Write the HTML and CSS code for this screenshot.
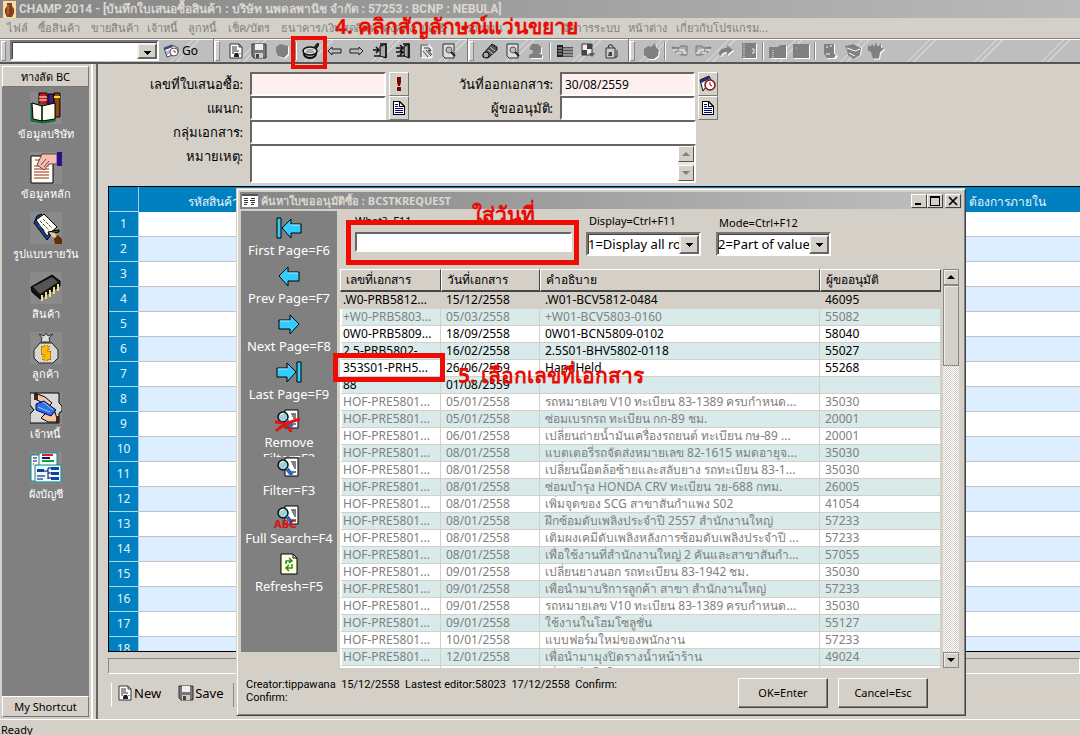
FILE: index.html
```html
<!DOCTYPE html>
<html lang="th">
<head>
<meta charset="utf-8">
<title>CHAMP 2014</title>
<link rel="stylesheet" href="styles.css">
</head>
<body>
<svg class="defs" width="0" height="0" aria-hidden="true">
  <symbol id="i-page" viewBox="0 0 16 16"><path d="M2 1h9l3 3v11H2z" fill="#fff" stroke="#333"/><path d="M11 1v3h3M4 4h5M4 6h5M4 8h7M4 10h2M12 10v1" stroke="#333" fill="none"/><path d="M6 14v-2l1-2h3l1 2v2z" fill="#222"/></symbol>
  <symbol id="i-disk" viewBox="0 0 16 16"><path d="M1 1h14v14H3l-2-2z" fill="#777" stroke="#333"/><path d="M4 1h8v6H4z" fill="#eee"/><path d="M4 10h8v5H4z" fill="#ccc"/><path d="M5 11h3v4H5z" fill="#444"/></symbol>
  <symbol id="i-shield" viewBox="0 0 16 16"><path d="M2 4l4-3 8 2v8l-4 4-6-2-2-5z" fill="#fff" transform="translate(1 1)"/><path d="M2 4l4-3 8 2v8l-4 4-6-2-2-5z" fill="#808080"/></symbol>
  <symbol id="i-mag" viewBox="0 0 18 18"><path d="M10 7l5-6h2v3l-4 5z" fill="#222"/><ellipse cx="8" cy="12" rx="6" ry="4" fill="#aaa" stroke="#111" stroke-width="2"/><ellipse cx="8" cy="9" rx="7" ry="4" fill="#ddd" stroke="#111" stroke-width="1.5"/><path d="M5 8h6M4 10h8" stroke="#777"/></symbol>
  <symbol id="i-left" viewBox="0 0 16 16"><path d="M2 8l4-4v2h9v4H6v2z" fill="#bbb" stroke="#222"/></symbol>
  <symbol id="i-right" viewBox="0 0 16 16"><path d="M14 8l-4-4v2H1v4h9v2z" fill="#bbb" stroke="#222"/></symbol>
  <symbol id="i-door" viewBox="0 0 16 16"><path d="M8 3l6-2v14l-6-2z" fill="#777" stroke="#111"/><path d="M10 4v9M12 3v10" stroke="#ddd"/><path d="M1 7h6M4 4l3 3-3 3M2 13h6M8 1h6v14" fill="none" stroke="#111" stroke-width="1.5"/></symbol>
  <symbol id="i-door2" viewBox="0 0 16 16"><path d="M9 3l5-2v14l-5-2z" fill="#777" stroke="#111"/><path d="M11 4v9" stroke="#ddd"/><path d="M1 5h7M5 2l3 3-3 3M1 9h7M5 7l3 2-3 3M2 13h7M8 1h6v14" fill="none" stroke="#111" stroke-width="1.5"/></symbol>
  <symbol id="i-tap" viewBox="0 0 16 16"><path d="M4 2h7l3 3v10H4z" fill="#ddd" stroke="#fff"/><path d="M3 14V2h7M6 5h5l2 3-3-1 4 5M5 8l5 6M8 7l5 6" stroke="#444" fill="none"/></symbol>
  <symbol id="i-pagemag" viewBox="0 0 16 16"><path d="M2 1h11v14H4l-2-2z" fill="#ddd" stroke="#333"/><circle cx="8" cy="7" r="3" fill="#bbb" stroke="#555"/><path d="M10 9l4 4" stroke="#222" stroke-width="2"/></symbol>
  <symbol id="i-roll" viewBox="0 0 16 16"><path d="M1 11L10 1l5 3v3L6 15l-5-1z" fill="#555" stroke="#111"/><circle cx="4" cy="12" r="3" fill="#aaa" stroke="#111"/><path d="M6 7l5 4M8 4l5 4" stroke="#ccc"/></symbol>
  <symbol id="i-person" viewBox="0 0 16 16"><path d="M4 2h6l3 2v6h-2l3 2v3H2v-3l3-2-1-3H2z" fill="#fff" transform="translate(1 1)"/><path d="M4 1h6l3 3v6h-2l3 2v3H1v-3l4-2-1-3H2V4z" fill="#808080"/></symbol>
  <symbol id="i-film" viewBox="0 0 16 16"><path d="M0 2h6v12H0z" fill="#222"/><path d="M6 4h10v10H6z" fill="#555"/><path d="M2 4v9M4 4v9" stroke="#bbb" stroke-dasharray="2 1"/><path d="M6 6h10M6 9h10M6 12h10" stroke="#ccc"/></symbol>
  <symbol id="i-cells" viewBox="0 0 16 16"><path d="M2 1h10v11H2z" fill="#eee" stroke="#333"/><path d="M7 1h5v5H7zM2 7h5v5H2z" fill="#444"/><path d="M9 10h6l-3 4z" fill="#555"/></symbol>
  <symbol id="i-bag" viewBox="0 0 16 16"><path d="M3 5h9v10H3z" fill="#ccc" stroke="#333"/><path d="M5 5l1-3h3l2 3M14 7v7h-2" stroke="#333" fill="none"/><path d="M5 13l1-4h3v4z" fill="#444"/></symbol>
  <symbol id="i-apple" viewBox="0 0 18 18"><path d="M2 7l4-3 3 1 4-4 1 4 3 3-1 6-4 3H7l-5-4z" fill="#fff" transform="translate(1 1)"/><path d="M2 7l4-3 3 1 4-4 1 4 3 3-1 6-4 3H7l-5-4z" fill="#808080"/></symbol>
  <symbol id="i-hand" viewBox="0 0 18 16"><path d="M1 4l7 1 2-2h6v9h-6l-3-2H5L4 8h3V6H2z" fill="#aaa" stroke="#777"/><path d="M2 7h5M8 7h5v3h3M5 10h5" stroke="#fff" fill="none"/></symbol>
  <symbol id="i-share" viewBox="0 0 16 16"><path d="M1 12c0-5 3-7 8-7V2l6 5-6 5V9c-3 0-5 1-6 4z" fill="#fff" transform="translate(1 1)"/><path d="M1 12c0-5 3-7 8-7V2l6 5-6 5V9c-3 0-5 1-6 4z" fill="#808080"/></symbol>
  <symbol id="i-note" viewBox="0 0 16 16"><path d="M2 1h14v15H2z" fill="#fff"/><path d="M1 0h14v15H1z" fill="#808080"/><path d="M3 1v14" stroke="#eee" stroke-dasharray="1 1"/><path d="M11 6h2v4h-2" stroke="#eee" fill="none"/></symbol>
  <symbol id="i-folder" viewBox="0 0 18 16"><path d="M1 4h9l2-2h5v13H1z" fill="#fff" transform="translate(1 1)"/><path d="M0 4h9l2-2h6v13H0z" fill="#808080"/><path d="M4 7v7" stroke="#eee" stroke-dasharray="1 1"/></symbol>
  <symbol id="i-box" viewBox="0 0 18 16"><path d="M2 2h16v14H2z" fill="#fff"/><path d="M1 1h16v14H1z" fill="#808080"/><path d="M4 5h1" stroke="#ddd"/></symbol>
  <symbol id="i-scroll" viewBox="0 0 16 16"><path d="M3 1h9v10l3 2-2 3H5l-3-4z" fill="#fff" transform="translate(1 0)"/><path d="M2 1h10v10l2 1-2 3H5l-3-4z" fill="#808080"/><path d="M4 4h2M8 3h2M4 11h4" stroke="#fff"/></symbol>
  <symbol id="i-pack" viewBox="0 0 18 16"><path d="M1 3l9-2 7 4-1 7-6 4-6-4-1-5z" fill="#fff" transform="translate(1 0)"/><path d="M1 3l9-2 7 4-1 7-6 4-6-4-1-5z" fill="#808080"/><path d="M3 5l8 3 5-2M5 10l6 3" stroke="#fff" fill="none"/></symbol>
  <symbol id="i-wave" viewBox="0 0 18 17"><path d="M1 3l3 1 1-3 2 3 2-4 2 4 3-3v4l3 1-4 4-1 6H6L4 10l-3-2z" fill="#fff" transform="translate(1 1)"/><path d="M1 3l3 1 1-3 2 3 2-4 2 4 3-3v4l3 1-4 4-1 6H6L4 10l-3-2z" fill="#808080"/></symbol>
  <symbol id="i-go" viewBox="0 0 16 16"><path d="M1 5l8-3 6 3v5L4 14z" fill="#fff" stroke="#445"/><path d="M1 5l8-3 1 2-8 3z" fill="#448"/><path d="M4 8v4M6 7v4" stroke="#66a"/><circle cx="11" cy="9" r="4" fill="#fff" stroke="#555"/><path d="M11 7v2h2" stroke="#a33" fill="none"/></symbol>
  <symbol id="i-doc" viewBox="0 0 14 14"><path d="M2 0h6l5 5v9H1V0z" fill="#000"/><path d="M2 1h5v5h5v7H2z" fill="#fff"/><path d="M8 2v3h3z" fill="#fff"/><path d="M3 3.5h3M3 5.5h3M3 7.500h8M3 9.500h8M3 11.500h8" stroke="#000080"/></symbol>
  <symbol id="i-bigleft" viewBox="0 0 26 22"><path d="M1 1h4v20H1z" fill="#3cf" stroke="#000"/><path d="M6 11l9-9v5h10v9H15v5z" fill="#3cf" stroke="#000"/><path d="M15 8h9" stroke="#aef"/></symbol>
  <symbol id="i-glass" viewBox="0 0 26 22"><path d="M9 1h13v18H9z" fill="#fff" stroke="#000"/><path d="M15 5h5M16 7h4M17 9h3M18 11h2M15 15h5" stroke="#000"/><circle cx="7" cy="8" r="5" fill="#9cd0dc" stroke="#111" stroke-width="1.5"/><path d="M4 6l4-2" stroke="#eff"/><path d="M11 12l5 6" stroke="#246ac0" stroke-width="4"/></symbol>
</svg>

<header class="titlebar">
  <svg width="13" height="17" viewBox="0 0 13 17"><path d="M0 0h13v17H0z" fill="#f4dfa0"/><path d="M4 2h5v3l2 3v4l-2 4H4l-2-4V8l2-3z" fill="#8a3d20"/><path d="M5 4v9" stroke="#c98a60"/></svg>
  <h1>CHAMP 2014 - [บันทึกใบเสนอซื้อสินค้า : บริษัท นพดลพานิช จำกัด : 57253 : BCNP : NEBULA]</h1>
</header>
<nav class="menubar">
  <button>ไฟล์</button><button>ซื้อสินค้า</button><button>ขายสินค้า</button><button>เจ้าหนี้</button><button>ลูกหนี้</button><button>เช็ค/บัตร</button><button>ธนาคาร/เงินสด</button><button>สินค้าคงคลัง</button><button>บัญชี</button><button>รายงาน</button><button>จัดการระบบ</button><button>หน้าต่าง</button><button>เกี่ยวกับโปรแกรม...</button>
</nav>
<div class="toolbar">
  <div class="band band-go">
    <span class="combo combo-go"><select aria-label="Go to"><option></option></select></span>
    <button class="go"><svg width="16" height="16"><use href="#i-go"/></svg>Go</button>
  </div>
  <div class="band band-a">
    <button aria-label="New"><svg><use href="#i-page"/></svg></button><button aria-label="Save"><svg><use href="#i-disk"/></svg></button><button aria-label="Delete"><svg><use href="#i-shield"/></svg></button><i class="sep"></i><button aria-label="Search"><svg class="wide"><use href="#i-mag"/></svg></button><button aria-label="Previous"><svg><use href="#i-left"/></svg></button><button aria-label="Next"><svg><use href="#i-right"/></svg></button><button aria-label="Close"><svg><use href="#i-door"/></svg></button><button aria-label="Close all"><svg><use href="#i-door2"/></svg></button><button aria-label="Select"><svg><use href="#i-tap"/></svg></button><button aria-label="Preview"><svg><use href="#i-pagemag"/></svg></button>
  </div>
  <div class="band band-b">
    <button aria-label="Roll"><svg><use href="#i-roll"/></svg></button><button aria-label="Find"><svg><use href="#i-pagemag"/></svg></button><button aria-label="User"><svg><use href="#i-person"/></svg></button><i class="sep"></i><button aria-label="List"><svg><use href="#i-film"/></svg></button><button aria-label="Cells"><svg><use href="#i-cells"/></svg></button><button aria-label="Bag"><svg><use href="#i-bag"/></svg></button>
  </div>
  <div class="band band-c">
    <button aria-label="Approve"><svg class="wide"><use href="#i-apple"/></svg></button><i class="sep"></i><button aria-label="Back"><svg class="wide"><use href="#i-hand"/></svg></button><button aria-label="Forward"><svg class="wide flip"><use href="#i-hand"/></svg></button><button aria-label="Send"><svg><use href="#i-share"/></svg></button><button aria-label="Notes"><svg><use href="#i-note"/></svg></button><i class="sep"></i><button aria-label="Folder"><svg class="wide"><use href="#i-folder"/></svg></button><button aria-label="Box"><svg class="wide"><use href="#i-box"/></svg></button><i class="sep"></i><button aria-label="Scroll"><svg><use href="#i-scroll"/></svg></button><button aria-label="Package"><svg class="wide"><use href="#i-pack"/></svg></button><button aria-label="Stop"><svg class="wide"><use href="#i-wave"/></svg></button>
  </div>
</div>

<div class="workspace">
  <aside class="shortcuts">
    <button class="tab">ทางลัด BC</button>
    <div class="shortcut-list">
      <button><svg viewBox="0 0 32 32"><path d="M9 1h8v16H9z" fill="#d01818" stroke="#000"/><path d="M9 5h8M9 8h8" stroke="#fff"/><path d="M18 2h6v16h-6z" fill="#402070" stroke="#000"/><path d="M24 1h6v24h-6z" fill="#8a4a10" stroke="#000"/><path d="M24 5h6" stroke="#ffd820" stroke-width="2"/><path d="M1 11v18l12 2 12-2V13" fill="#18803c" stroke="#063"/><path d="M2 11l10 3v15L3 27zM12 14l13-3v16l-13 2z" fill="#fffff0" stroke="#000"/></svg>ข้อมูลบริษัท</button>
      <button><svg viewBox="0 0 32 32"><path d="M1 4h22v27H1z" fill="#fffff4" stroke="#000"/><path d="M5 8h7M4 14h15M4 17h15M4 20h15M4 23h15M4 26h15" stroke="#a02020"/><path d="M12 2h15v10h-8l-5 6-4-3-3-2z" fill="#f0c0b0" stroke="#644"/><path d="M11 13l5-6M14 15l5-6" stroke="#844"/><path d="M27 0h5v14h-5z" fill="#281090"/></svg>ข้อมูลหลัก</button>
      <button><svg viewBox="0 0 32 32"><path d="M4 11l3-7 4-2 14 16-8 10z" fill="#2040a0" stroke="#000"/><path d="M6 8l8-6 13 13-10 9z" fill="#fffff0" stroke="#000"/><path d="M10 9l9 9M13 7l9 9M9 13l6 6" stroke="#555" stroke-dasharray="3 1"/><path d="M18 20l11-2v2l-10 2z" fill="#183" stroke="#000"/><path d="M19 20l6 1 2 5-5-1z" fill="#f2c0a0"/><path d="M24 27l4-4 4 4v5h-7z" fill="#603000"/></svg>รูปแบบรายวัน</button>
      <button><svg viewBox="0 0 32 32"><path d="M1 15L22 3l8 6v5L10 27 2 20z" fill="#111" stroke="#000"/><path d="M3 15L22 5l6 5-18 12z" fill="#555"/><path d="M12 23v6M16 20v7M20 18v7M24 15v7M28 12v7" stroke="#e8e090" stroke-width="2"/></svg>สินค้า</button>
      <button><svg viewBox="0 0 32 32"><path d="M9 2l3 4-1 4h9l-1-4 4-4-5 2-2-3-2 3z" fill="#ddd" stroke="#333"/><path d="M10 11h12l6 7v8l-5 5H9l-5-5v-8z" fill="#d8d8d0" stroke="#222"/><path d="M20 16h-7v5h6v5h-7M16 13v16" fill="none" stroke="#744" stroke-width="4"/><path d="M20 16h-7v5h6v5h-7M16 13v16" fill="none" stroke="#fb0" stroke-width="3"/></svg>ลูกค้า</button>
      <button><svg viewBox="0 0 32 32"><path d="M0 1h29v10l3 3v5l-3 2v10H0v-9l4-4-4-5z" fill="#d8d8d8" stroke="#000"/><path d="M5 1l10 4 7 6-3 3-8-4-6-3z" fill="#f5c8a0" stroke="#000"/><path d="M11 26l6-6h8l3 10h-10z" fill="#f5c8a0" stroke="#000"/><path d="M6 12l8-3 12 9-5 6L6 18z" fill="#3070e0" stroke="#006"/><path d="M8 15l12 5M13 10l10 8" stroke="#9cf"/><path d="M4 2h4v6H4zM26 24h3v7h-3z" fill="#422"/></svg>เจ้าหนี้</button>
      <button><svg viewBox="0 0 32 32"><path d="M1 3h22v26H1z" fill="#fff" stroke="#088"/><path d="M9 1h18v20H9z" fill="#fff" stroke="#088"/><path d="M12 3h11" stroke="#e02020" stroke-width="2"/><path d="M12 6h8" stroke="#208" stroke-width="2"/><path d="M12 9h12" stroke="#0a2" stroke-width="2"/><path d="M5 13h26v17H5z" fill="#e8fbff" stroke="#088"/><path d="M7 17h7v3H7zM21 15h8v3h-8zM21 20h8v3h-8zM21 25h8v3h-8z" fill="#1840a0"/><path d="M14 19h4M18 16v11M18 16h3M18 21h3M18 26h3M7 24h8M7 27h6M3 6h4M3 9h4M3 12h1" stroke="#000060" fill="none"/></svg>ผังบัญชี</button>
    </div>
    <button class="tab">My Shortcut</button>
  </aside>

  <main class="document">
    <form class="form">
      <label for="f-no">เลขที่ใบเสนอซื้อ:</label>
      <div class="field"><input id="f-no" class="required" type="text"><button type="button" aria-label="Generate"><svg width="14" height="18" viewBox="0 0 14 18"><path d="M5 2h4v5l-1 4H6L5 7z" fill="#800000"/><path d="M5 12h4v4H5z" fill="#800000"/></svg></button></div>
      <label for="f-date">วันที่ออกเอกสาร:</label>
      <div class="field"><input id="f-date" class="required" type="text" value="30/08/2559"><button type="button" aria-label="Calendar"><svg width="18" height="18" viewBox="0 0 18 18"><path d="M1 5l9-4 2 4-8 11z" fill="#fff" stroke="#000"/><path d="M1 5l9-4 1 3-9 4z" fill="#223078"/><circle cx="11" cy="10" r="5" fill="#fff" stroke="#801010" stroke-width="1.5"/><path d="M11 7v3l2 1" stroke="#a00" fill="none"/></svg></button></div>
      <label for="f-dept">แผนก:</label>
      <div class="field"><input id="f-dept" type="text"><button type="button" aria-label="Choose department"><svg width="14" height="14"><use href="#i-doc"/></svg></button></div>
      <label for="f-req">ผู้ขออนุมัติ:</label>
      <div class="field"><input id="f-req" type="text"><button type="button" aria-label="Choose requester"><svg width="14" height="14"><use href="#i-doc"/></svg></button></div>
      <label for="f-group">กลุ่มเอกสาร:</label>
      <div class="field long"><input id="f-group" type="text"></div>
      <label for="f-note">หมายเหตุ:</label>
      <div class="field long note"><textarea id="f-note"></textarea><div class="spin"><button type="button" aria-label="Up"><i class="up off"></i></button><button type="button" aria-label="Down"><i class="down off"></i></button></div></div>
    </form>

    <div class="grid">
      <table>
        <colgroup><col class="g-num"><col class="g-code"><col><col class="g-due"></colgroup>
        <thead><tr><th></th><th>รหัสสินค้า</th><th></th><th class="due">ต้องการภายใน</th></tr></thead>
        <tbody>
          <tr><th>1</th><td></td><td></td><td></td></tr><tr><th>2</th><td></td><td></td><td></td></tr>
          <tr><th>3</th><td></td><td></td><td></td></tr><tr><th>4</th><td></td><td></td><td></td></tr>
          <tr><th>5</th><td></td><td></td><td></td></tr><tr><th>6</th><td></td><td></td><td></td></tr>
          <tr><th>7</th><td></td><td></td><td></td></tr><tr><th>8</th><td></td><td></td><td></td></tr>
          <tr><th>9</th><td></td><td></td><td></td></tr><tr><th>10</th><td></td><td></td><td></td></tr>
          <tr><th>11</th><td></td><td></td><td></td></tr><tr><th>12</th><td></td><td></td><td></td></tr>
          <tr><th>13</th><td></td><td></td><td></td></tr><tr><th>14</th><td></td><td></td><td></td></tr>
          <tr><th>15</th><td></td><td></td><td></td></tr><tr><th>16</th><td></td><td></td><td></td></tr>
          <tr><th>17</th><td></td><td></td><td></td></tr><tr><th>18</th><td></td><td></td><td></td></tr>
        </tbody>
      </table>
    </div>
    <div class="info-line"></div>
    <div class="actions">
      <button><svg width="16" height="16"><use href="#i-page"/></svg>New</button>
      <button><svg width="16" height="16"><use href="#i-disk"/></svg>Save</button>
    </div>
  </main>
</div>
<footer class="status">Ready</footer>

<section class="dialog" role="dialog" aria-labelledby="dlg-title">
  <div class="dialog-title">
    <svg width="16" height="13" viewBox="0 0 16 13"><path d="M0 0h16v13H0z" fill="#fff"/><path d="M0 0h16v2H0z" fill="#556"/><path d="M2 4.500h4M2 6.500h4M2 8.500h4M2 10.500h3M9 4.500h4M8 6.500h5M9 8.500h4M9 10.500h3" stroke="#333"/></svg>
    <h2 id="dlg-title">ค้นหาใบขออนุมัติซื้อ : BCSTKREQUEST</h2>
    <div class="win-buttons">
      <button aria-label="Minimize"><svg width="10" height="10" viewBox="0 0 10 10"><path d="M1 7h6v2H1z"/></svg></button><button aria-label="Maximize"><svg width="10" height="10" viewBox="0 0 10 10"><path d="M0 0h10v10H0zM1 2v7h8V2z" fill-rule="evenodd"/></svg></button><button class="close" aria-label="Close"><svg width="10" height="10" viewBox="0 0 10 10"><path d="M1 1l8 8M9 1L1 9" stroke="#000" stroke-width="1.7"/></svg></button>
    </div>
  </div>
  <div class="dialog-body">
    <nav class="tools">
      <button><svg><use href="#i-bigleft"/></svg><span>First Page=F6</span></button>
      <button><svg viewBox="0 0 26 22"><path d="M3 11l9-9v5h11v9H12v5z" fill="#3cf" stroke="#000"/><path d="M12 8h10" stroke="#aef"/></svg><span>Prev Page=F7</span></button>
      <button><svg viewBox="0 0 26 22"><path d="M23 11l-9-9v5H3v9h11v5z" fill="#3cf" stroke="#000"/><path d="M4 8h10" stroke="#aef"/></svg><span>Next Page=F8</span></button>
      <button><svg class="flip"><use href="#i-bigleft"/></svg><span>Last Page=F9</span></button>
      <button><svg viewBox="0 0 26 22" class="over"><use href="#i-glass"/><path d="M-1 13c8 0 14 4 16 10M0 22c5-5 13-9 24-12" stroke="#e81010" stroke-width="3" fill="none"/></svg><span>Remove<br>Filter=F2</span></button>
      <button><svg><use href="#i-glass"/></svg><span>Filter=F3</span></button>
      <button><svg viewBox="0 0 26 22" class="over"><use href="#i-glass"/><text x="-2" y="23" class="abc">ABC</text></svg><span>Full Search=F4</span></button>
      <button><svg viewBox="0 0 26 22"><path d="M5 1h12l4 4v16H5z" fill="#ffffe0" stroke="#000"/><path d="M17 1v4h4" fill="none" stroke="#000"/><path d="M10 11V8h5M13 5l3 3-3 2M16 11v4h-5M13 12l-3 3 3 3" fill="none" stroke="#289018" stroke-width="1.5"/></svg><span>Refresh=F5</span></button>
    </nav>
    <div class="search">
      <div class="criteria">
        <div class="what"><label for="q">What?=F11</label><input id="q" type="text"></div>
        <div class="pick"><label for="disp">Display=Ctrl+F11</label><span class="combo"><select id="disp"><option>1=Display all rows</option></select></span></div>
        <div class="pick low"><label for="mode">Mode=Ctrl+F12</label><span class="combo"><select id="mode"><option>2=Part of value</option></select></span></div>
      </div>
      <div class="results">
        <div class="result-view">
        <table>
          <colgroup><col class="c-no"><col class="c-date"><col><col class="c-by"></colgroup>
          <thead><tr><th>เลขที่เอกสาร</th><th>วันที่เอกสาร</th><th>คำอธิบาย</th><th>ผู้ขออนุมัติ</th></tr></thead>
          <tbody>
            <tr class="selected"><td>.W0-PRB5812...</td><td>15/12/2558</td><td>.W01-BCV5812-0484</td><td>46095</td></tr>
            <tr class="dim"><td>+W0-PRB5803...</td><td>05/03/2558</td><td>+W01-BCV5803-0160</td><td>55082</td></tr>
            <tr><td>0W0-PRB5809...</td><td>18/09/2558</td><td>0W01-BCN5809-0102</td><td>58040</td></tr>
            <tr><td>2.5-PRB5802-</td><td>16/02/2558</td><td>2.5S01-BHV5802-0118</td><td>55027</td></tr>
            <tr><td>353S01-PRH5...</td><td>26/06/2559</td><td>HandHeld</td><td>55268</td></tr>
            <tr><td>88</td><td>01/08/2559</td><td></td><td></td></tr>
            <tr class="dim"><td>HOF-PRE5801...</td><td>05/01/2558</td><td>รถหมายเลข V10 ทะเบียน 83-1389 ครบกำหนด...</td><td>35030</td></tr>
            <tr class="dim"><td>HOF-PRE5801...</td><td>05/01/2558</td><td>ซ่อมเบรกรถ ทะเบียน กก-89 ชม.</td><td>20001</td></tr>
            <tr class="dim"><td>HOF-PRE5801...</td><td>06/01/2558</td><td>เปลี่ยนถ่ายน้ำมันเครื่องรถยนต์ ทะเบียน กษ-89 ...</td><td>20001</td></tr>
            <tr class="dim"><td>HOF-PRE5801...</td><td>08/01/2558</td><td>แบตเตอรี่รถจัดส่งหมายเลข 82-1615 หมดอายุจ...</td><td>35030</td></tr>
            <tr class="dim"><td>HOF-PRE5801...</td><td>08/01/2558</td><td>เปลี่ยนน๊อตล้อซ้ายและสลับยาง รถทะเบียน 83-1...</td><td>35030</td></tr>
            <tr class="dim"><td>HOF-PRE5801...</td><td>08/01/2558</td><td>ซ่อมบำรุง HONDA CRV ทะเบียน วย-688 กทม.</td><td>26005</td></tr>
            <tr class="dim"><td>HOF-PRE5801...</td><td>08/01/2558</td><td>เพิ่มจุดของ SCG สาขาสันกำแพง S02</td><td>41054</td></tr>
            <tr class="dim"><td>HOF-PRE5801...</td><td>08/01/2558</td><td>ฝึกซ้อมดับเพลิงประจำปี 2557 สำนักงานใหญ่</td><td>57233</td></tr>
            <tr class="dim"><td>HOF-PRE5801...</td><td>08/01/2558</td><td>เติมผงเคมีดับเพลิงหลังการซ้อมดับเพลิงประจำปี ...</td><td>57233</td></tr>
            <tr class="dim"><td>HOF-PRE5801...</td><td>08/01/2558</td><td>เพื่อใช้งานที่สำนักงานใหญ่ 2 คันและสาขาสันกำ...</td><td>57055</td></tr>
            <tr class="dim"><td>HOF-PRE5801...</td><td>09/01/2558</td><td>เปลี่ยนยางนอก รถทะเบียน 83-1942 ชม.</td><td>35030</td></tr>
            <tr class="dim"><td>HOF-PRE5801...</td><td>09/01/2558</td><td>เพื่อนำมาบริการลูกค้า สาขา สำนักงานใหญ่</td><td>57233</td></tr>
            <tr class="dim"><td>HOF-PRE5801...</td><td>09/01/2558</td><td>รถหมายเลข V10 ทะเบียน 83-1389 ครบกำหนด...</td><td>35030</td></tr>
            <tr class="dim"><td>HOF-PRE5801...</td><td>09/01/2558</td><td>ใช้งานในโฮมโซลูชั่น</td><td>55127</td></tr>
            <tr class="dim"><td>HOF-PRE5801...</td><td>10/01/2558</td><td>แบบฟอร์มใหม่ของพนักงาน</td><td>57233</td></tr>
            <tr class="dim"><td>HOF-PRE5801...</td><td>12/01/2558</td><td>เพื่อนำมามุงปิดรางน้ำหน้าร้าน</td><td>49024</td></tr>
            <tr class="dim"><td></td><td></td><td>เพื่อนำไปใช้ในร้าน</td><td></td></tr>
          </tbody>
        </table>
        </div>
        <div class="scrollbar"><button aria-label="Scroll up"><i class="up"></i></button><div class="thumb"></div><button class="end" aria-label="Scroll down"><i class="down"></i></button></div>
      </div>
    </div>
  </div>
  <div class="dialog-foot">
    <p>Creator:tippawana&nbsp; 15/12/2558&nbsp; Lastest editor:58023&nbsp; 17/12/2558&nbsp; Confirm:<br>Confirm:</p>
    <button>OK=Enter</button><button>Cancel=Esc</button>
  </div>
</section>

<div class="mark-text step4">4. คลิกสัญลักษณ์แว่นขยาย</div>
<div class="mark-text date">ใส่วันที่</div>
<div class="mark-text step5">5. เลือกเลขที่เอกสาร</div>
<div class="mark-box search-icon"></div>
<div class="mark-box what-box"></div>
<div class="mark-box doc-row"></div>
</body>
</html>
```

FILE: styles.css
```css
* { box-sizing: border-box; }
html, body { height: 100%; }
body {
  margin: 0;
  position: relative;
  display: flex;
  flex-direction: column;
  overflow: hidden;
  background: #d4d0c8;
  color: #000;
  font: 12px/16px "Noto Sans", "DejaVu Sans", sans-serif;
  white-space: nowrap;
}
button, input, select, textarea { font: inherit; color: inherit; border-radius: 0; margin: 0; }
button { padding: 0; border: 0; background: none; }
h1, h2, p { margin: 0; }
svg { flex: none; }
svg.flip { transform: scaleX(-1); }
.defs { position: absolute; }

.titlebar { flex: none; height: 18px; display: flex; align-items: center; gap: 3px; padding-left: 3px; background: linear-gradient(90deg, #858585, #bababa); color: #dcd8d0; }
.titlebar h1 { font: 700 12px/18px Roboto, "Noto Sans", sans-serif; }

.menubar { flex: none; height: 20px; display: grid; grid-template-columns: 31px 53px 56px 41px 40px 53px 74px 66px 45px 96px 66px 48px 1fr; padding-left: 7px; color: #808080; }
.menubar button { text-align: left; white-space: nowrap; font-size: 11px; }

.toolbar {
  flex: none;
  height: 26px;
  display: flex;
  border-top: 1px solid #808080;
  border-bottom: 2px solid #555;
  background:
    linear-gradient(135deg, transparent 44%, #d2d2d2 45%, #d2d2d2 46%, transparent 47%, transparent 51%, #d8d8d8 52%, #d8d8d8 53%, transparent 54%) 18px 0 / 67px 24px,
    #bebebe;
  box-shadow: inset 0 1px #fff;
}
.band { display: flex; align-items: center; border-right: 1px solid #777; box-shadow: 1px 0 #fff; padding-left: 10px; position: relative; }
.band::before { content: ""; align-self: center; width: 3px; height: 18px; margin-left: -7px; margin-right: 4px; border: 1px solid #888; border-top-color: #fff; border-left-color: #fff; background: #d4d0c8; }
.band-go { width: 214px; padding-left: 8px; }
.band-a { width: 254px; padding-left: 8px; }
.band-b { width: 161px; padding-left: 8px; }
.band-c { flex: 1; padding-left: 8px; border-right: 0; box-shadow: none; }
.band > button:not(.go) { width: 23px; height: 20px; display: flex; align-items: center; justify-content: center; }
.band > button svg { width: 16px; height: 16px; }
.band > button svg.wide { width: 18px; height: 18px; }
.sep { width: 2px; height: 18px; margin: 0 2px; background: #888; border-right: 1px solid #fff; }
.go { display: flex; align-items: center; gap: 3px; margin-left: 4px; }

.combo { position: relative; display: flex; background: #fff; border: 2px solid; border-color: #777 #fff #fff #777; box-shadow: inset 1px 1px #444; }
.combo select { width: 100%; height: 20px; padding: 0 17px 0 0; border: 0; background: none; appearance: none; overflow: hidden; }
.combo::after { content: ""; position: absolute; right: 0; top: 1px; bottom: 0; width: 16px; border: 2px solid; border-color: #f4f2ee #666 #666 #f4f2ee; background: linear-gradient(#000, #000) center 6px / 7px 1px no-repeat, linear-gradient(#000, #000) center 7px / 5px 1px no-repeat, linear-gradient(#000, #000) center 8px / 3px 1px no-repeat, linear-gradient(#000, #000) center 9px / 1px 1px no-repeat, #d4d0c8; pointer-events: none; }
.combo-go { width: 149px; }
.combo-go select { height: 17px; }

.workspace { flex: 1; min-height: 0; display: flex; }
.shortcuts { flex: none; width: 98px; display: flex; flex-direction: column; padding: 2px 7px 2px 2px; border-right: 2px solid #666; background: linear-gradient(#fff, #fff) 91px 0 / 2px 100% no-repeat; }
.tab { height: 21px; flex: none; border: 1px solid; border-color: #fff #777 #777 #fff; background: #d4d0c8; font-size: 11px; }
.shortcut-list { flex: 1; background: #808080; display: flex; flex-direction: column; padding-top: 5px; }
.shortcut-list button { height: 60px; display: flex; flex-direction: column; align-items: center; gap: 2px; color: #fff; font-size: 11px; }
.shortcut-list svg { width: 32px; height: 32px; background: #8a8a8a; }

.document { flex: 1; min-width: 0; display: flex; flex-direction: column; padding: 8px 0 0 10px; }
.form { display: grid; grid-template-columns: 142px 159px 151px 158px; grid-auto-rows: 24px; font-size: 13px; }
.form label { text-align: right; padding: 4px 7px 0 0; }
.field { display: flex; gap: 3px; }
.field input, .field textarea { flex: 1; min-width: 0; height: 24px; border: 2px solid; border-color: #666 #fff #fff #666; background: #fff; padding: 0 3px; resize: none; }
.field input { font-size: 12px; }
.field input.required { background: #fff0f0; }
.field > button { width: 20px; display: flex; align-items: center; justify-content: center; border: 1px solid; border-color: #fff #777 #777 #fff; }
.field.long { grid-column: 2 / -1; width: 446px; }
.field.note { height: 39px; gap: 0; border: 2px solid; border-color: #666 #fff #fff #666; background: #fff; }
.field.note textarea { border: 0; height: 35px; }
.spin { width: 16px; display: flex; flex-direction: column; justify-content: space-between; background: #e8e6e2; }
.spin button { height: 16px; display: flex; align-items: center; justify-content: center; border: 1px solid; border-color: #fff #555 #555 #fff; background: #d4d0c8; }
.up, .down { border: 4px solid transparent; }
.up { border-top: 0; border-bottom-color: #000; }
.down { border-bottom: 0; border-top-color: #000; }
.up.off { border-bottom-color: #808080; }
.down.off { border-top-color: #808080; }

.grid { flex: 1; min-height: 0; margin-top: 18px; overflow: hidden; border: 1px solid #000; border-right: 0; background: #fff; }
.grid table { width: 100%; table-layout: fixed; border-collapse: separate; border-spacing: 0; }
.g-num { width: 30px; }
.g-code { width: 148px; }
.g-due { width: 170px; }
.grid th, .grid td { height: 25px; padding: 0; border-bottom: 1px solid #c0c4c8; }
.grid th { background: #0080c0; color: #e4f4fa; font-weight: 400; font-size: 12px; border-bottom-color: #b0d8ea; border-right: 1px solid #a0cce4; }
.grid thead th + th { border-right: 0; border-bottom-color: #0080c0; }
.grid thead .due { text-align: right; padding: 5px 34px 0 0; }
.grid thead th { padding-top: 5px; }
.grid tbody tr:nth-child(even) td { background: #dceeff; }
.info-line { flex: none; height: 16px; margin-top: 6px; border: 1px solid; border-color: #888 #fff #fff #888; }
.actions { flex: none; height: 24px; display: flex; gap: 17px; margin: 9px 0 12px 3px; padding-left: 5px; border-left: 1px solid #fff; width: 123px; border-right: 1px solid #888; }
.actions button { display: flex; align-items: center; gap: 1px; height: 20px; font-size: 13px; }
.status { flex: none; height: 16px; line-height: 20px; border-top: 1px solid #fff; padding-left: 1px; font-size: 11px; }

.dialog { position: absolute; left: 236px; top: 188px; width: 730px; height: 528px; display: flex; flex-direction: column; padding: 3px; border: 1px solid; border-color: #d4d0c8 #444 #444 #d4d0c8; box-shadow: inset 1px 1px #fff, inset -1px -1px #808080; background: #d4d0c8; }
.dialog-title { flex: none; height: 17px; display: flex; align-items: center; gap: 3px; padding: 0 1px 0 2px; background: linear-gradient(90deg, #858585, #c0c0c0); color: #dcd8d0; }
.dialog-title h2 { flex: 1; font-size: 11px; line-height: 17px; font-weight: 700; }
.win-buttons { display: flex; }
.win-buttons button { width: 16px; height: 14px; display: flex; align-items: center; justify-content: center; background: #d4d0c8; border: 1px solid; border-color: #fff #444 #444 #fff; }
.win-buttons .close { margin-left: 2px; }
.dialog-body { flex: 1; min-height: 0; display: flex; gap: 3px; padding: 2px 3px 0 1px; }
.tools { width: 96px; height: 441px; background: #808080; display: flex; flex-direction: column; padding-top: 6px; }
.tools button { height: 48px; display: flex; flex-direction: column; align-items: center; color: #fff; }
.tools svg { width: 26px; height: 22px; }
.tools svg.over { overflow: visible; }
.tools span { margin-top: 3px; line-height: 16px; font-size: 13px; height: 23px; overflow: hidden; }
.abc { font: 700 10px "DejaVu Sans", sans-serif; fill: #d81010; }
.search { flex: 1; min-width: 0; display: flex; flex-direction: column; }
.criteria { flex: none; height: 58px; display: flex; font-size: 11px; }
.what { width: 231px; margin-left: 15px; display: flex; flex-direction: column; gap: 3px; padding-top: 2px; }
.what input { width: 217px; height: 20px; border: 2px solid; border-color: #666 #fff #fff #666; background: #fff; }
.pick { width: 130px; display: flex; flex-direction: column; gap: 3px; padding-top: 2px; }
.pick label { padding-left: 3px; }
.pick.low { padding-top: 4px; gap: 1px; }
.pick .combo { width: 115px; font-size: 13px; }
.results { flex: 1; min-height: 0; display: flex; gap: 2px; height: 401px; max-height: 401px; }
.result-view { flex: 1; min-width: 0; overflow: hidden; background: #fff; }
.results table { width: 100%; table-layout: fixed; border-collapse: separate; border-spacing: 0; }
.c-no { width: 101px; }
.c-date { width: 99px; }
.c-by { width: 121px; }
.results th { height: 23px; padding: 0 5px; text-align: left; font-weight: 400; background: #d4d0c8; border: 1px solid; border-color: #fff #444 #444 #fff; border-bottom-width: 2px; line-height: 18px; overflow: hidden; }
.results td { height: 17px; padding: 0 0 0 5px; line-height: 16px; border-right: 1px solid #d4d0c8; border-bottom: 1px solid #d4d0c8; overflow: hidden; }
.results td:first-child { padding-left: 1px; border-left: 2px solid #fff; }
.results tbody tr:nth-child(even) td { background: #d8eaea; }
.results .selected td, .results .selected td:first-child { background: #d4d0c8; border-color: #d4d0c8; }
.results .dim { color: #808080; }
.scrollbar { width: 16px; display: flex; flex-direction: column; background: repeating-conic-gradient(#fff 0 25%, #d4d0c8 0 50%) 0 0 / 2px 2px; }
.scrollbar button, .thumb { border: 1px solid #888; background: #d4d0c8; box-shadow: inset 1px 1px #eee; }
.scrollbar button { height: 16px; display: flex; align-items: center; justify-content: center; }
.thumb { height: 81px; }
.scrollbar .end { margin-top: auto; }
.dialog-foot { flex: none; height: 44px; display: flex; gap: 10px; align-items: flex-start; padding: 10px 34px 0 6px; font-size: 11px; }
.dialog-foot p { flex: 1; font: 11px/13px Roboto, "Noto Sans", sans-serif; }
.dialog-foot button { width: 90px; height: 30px; border: 1px solid; border-color: #fff #444 #444 #fff; box-shadow: inset -1px -1px #808080; }

.mark-box { position: absolute; border: 5px solid #ee0c04; pointer-events: none; }
.search-icon { left: 291px; top: 36px; width: 36px; height: 33px; border-width: 4px; }
.what-box { left: 346px; top: 220px; width: 233px; height: 45px; }
.doc-row { left: 333px; top: 353px; width: 112px; height: 29px; }
.mark-text { position: absolute; color: #e80c04; font: 700 21px/24px "Noto Sans", "DejaVu Sans", sans-serif; }
.step4 { left: 335px; top: 14px; }
.date { left: 472px; top: 202px; }
.step5 { left: 458px; top: 363px; }
```
